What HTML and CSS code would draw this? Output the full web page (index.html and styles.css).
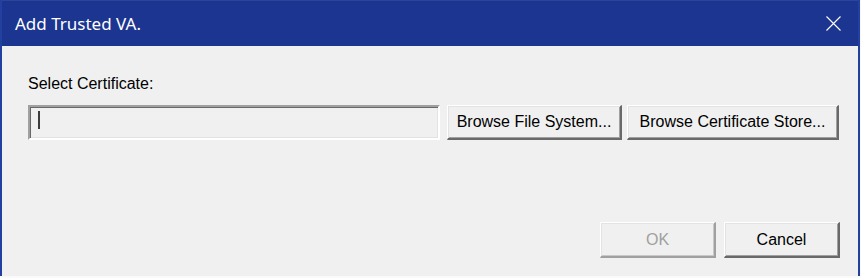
FILE: index.html
```html
<!DOCTYPE html>
<html lang="en">
<head>
  <meta charset="UTF-8" />
  <title>Add Trusted VA.</title>
  <link rel="stylesheet" href="styles.css">
</head>
<body>
  <div class="window">
    <div class="titlebar">
      <span class="title">Add Trusted VA.</span>
      <button class="close" type="button" aria-label="Close">
        <svg width="15" height="15" viewBox="0 0 15 15">
          <path d="M0.5 0.5 L14.5 14.5 M14.5 0.5 L0.5 14.5" stroke="#fff" stroke-width="1.1" fill="none" />
        </svg>
      </button>
    </div>

    <div class="dialog">
      <label class="field-label" for="cert">Select Certificate:</label>

      <div class="cert-row">
        <div class="cert-field" id="cert">
          <span class="caret"></span>
        </div>
        <button class="btn btn-fs" type="button">Browse File System...</button>
        <button class="btn btn-store" type="button">Browse Certificate Store...</button>
      </div>

      <div class="footer">
        <button class="btn btn-action" type="button" disabled>OK</button>
        <button class="btn btn-action" type="button">Cancel</button>
      </div>
    </div>
  </div>
  <div class="behind"></div>
</body>
</html>
```

FILE: styles.css
```css
body {
  margin: 0;
  padding: 0;
  width: 861px;
  height: 278px;
  overflow: hidden;
  background: #f7f7f7;
  font-family: "Liberation Sans", Arial, sans-serif;
}

.window {
  width: 860px;
  height: 276px;
  box-sizing: border-box;
  border-left: 2px solid #2140a0;
  border-right: 2px solid #2140a0;
  background: #f0f0f0;
  display: flex;
  flex-direction: column;
}

.titlebar {
  height: 46px;
  flex-shrink: 0;
  background: #1b3590;
  border-top: 1px solid #2b4598;
  box-sizing: border-box;
  display: flex;
  align-items: center;
  justify-content: space-between;
  padding-left: 13px;
}

.title {
  color: #ffffff;
  font-family: "Noto Sans", "Open Sans", sans-serif;
  font-size: 17px;
  margin-top: -1px;
}

.close {
  width: 46px;
  height: 45px;
  border: none;
  background: transparent;
  padding: 0;
  margin-right: 2px;
  display: flex;
  align-items: center;
  justify-content: center;
}

.dialog {
  flex: 1;
  display: flex;
  flex-direction: column;
  padding: 29px 18px 18px 26px;
}

.field-label {
  font-size: 16px;
  line-height: 18px;
  color: #000;
}

.cert-row {
  display: flex;
  align-items: flex-start;
  margin-top: 12px;
}

.cert-field {
  width: 412px;
  height: 35px;
  box-sizing: border-box;
  border-top: 2px solid #a0a0a0;
  border-left: 2px solid #a0a0a0;
  border-bottom: 2px solid #ffffff;
  border-right: 2px solid #ffffff;
  box-shadow: inset 1px 1px 0 #696969, inset -1px -1px 0 #e3e3e3;
  background: #f0f0f0;
  padding: 4px 0 0 8px;
}

.caret {
  display: block;
  width: 2px;
  height: 18px;
  background: #3c3c3c;
}

.btn {
  height: 35px;
  box-sizing: border-box;
  background: #f0f0f0;
  font-family: "Liberation Sans", Arial, sans-serif;
  font-size: 16px;
  color: #000;
  padding: 0;
  border-top: 1px solid #ffffff;
  border-left: 1px solid #ffffff;
  border-bottom: 2px solid #696969;
  border-right: 2px solid #696969;
  box-shadow: inset 1px 1px 0 #e3e3e3, inset -1px -1px 0 #a0a0a0;
  border-radius: 0;
}

.btn-fs {
  width: 175px;
  margin-left: 7px;
}

.btn-store {
  width: 212px;
  margin-left: 5px;
}

.footer {
  margin-top: auto;
  display: flex;
  justify-content: flex-end;
  gap: 8px;
}

.btn-action {
  width: 116px;
  height: 36px;
}

.btn-action:disabled {
  color: #a0a0a0;
  border-bottom-color: #a0a0a0;
  border-right-color: #a0a0a0;
  box-shadow: inset 1px 1px 0 #e3e3e3, inset -1px -1px 0 #c8c8c8;
}

.behind {
  height: 2px;
  background: #fafafa;
}
```
